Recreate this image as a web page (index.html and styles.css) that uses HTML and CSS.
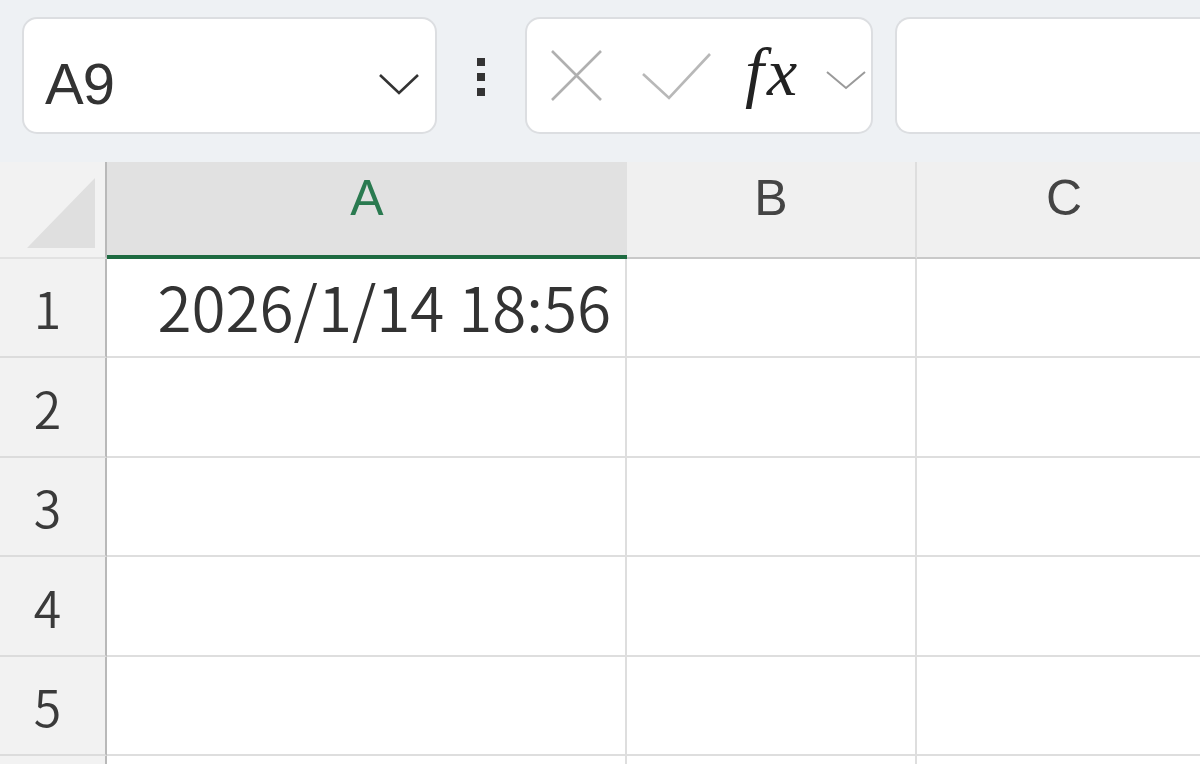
FILE: index.html
```html
<!DOCTYPE html>
<html lang="ja">
<head>
<meta charset="utf-8">
<title>Excel</title>
<link rel="stylesheet" href="styles.css">
</head>
<body>
<div class="toolbar">
  <div class="namebox">
    <span class="name">A9</span>
    <svg class="chev" width="42" height="24" viewBox="0 0 42 24"><polyline points="2,3 21,21 40,3" fill="none" stroke="#333" stroke-width="2.6"/></svg>
  </div>
  <div class="grip">
    <span class="dot"></span><span class="dot"></span><span class="dot"></span>
  </div>
  <div class="fbuttons">
    <svg class="icon-x" width="54" height="54" viewBox="0 0 54 54"><path d="M2 2 L51 51 M51 2 L2 51" stroke="#b0b0b0" stroke-width="2.6" fill="none"/></svg>
    <svg class="icon-check" width="72" height="50" viewBox="0 0 72 50"><polyline points="2,22 28,46 69,2" fill="none" stroke="#b8b8b8" stroke-width="2.6"/></svg>
    <span class="fx"><span class="fx-f">f</span>x</span>
    <svg class="chev-small" width="42" height="22" viewBox="0 0 42 22"><polyline points="2,3 21,19 40,3" fill="none" stroke="#9a9a9a" stroke-width="2"/></svg>
  </div>
  <div class="finput"></div>
</div>
<div class="sheet">
  <div class="corner"><svg width="70" height="72" viewBox="0 0 70 72"><polygon points="0,70 68,0 68,70" fill="#dfdfdf"/></svg></div>
  <div class="colhead sel">A</div>
  <div class="colhead">B</div>
  <div class="colhead">C</div>

  <div class="rowhead">1</div>
  <div class="cell"><span class="val">2026/1/14 18:56</span></div>
  <div class="cell"></div>
  <div class="cell"></div>

  <div class="rowhead">2</div>
  <div class="cell"></div>
  <div class="cell"></div>
  <div class="cell"></div>

  <div class="rowhead">3</div>
  <div class="cell"></div>
  <div class="cell"></div>
  <div class="cell"></div>

  <div class="rowhead">4</div>
  <div class="cell"></div>
  <div class="cell"></div>
  <div class="cell"></div>

  <div class="rowhead">5</div>
  <div class="cell"></div>
  <div class="cell"></div>
  <div class="cell"></div>

  <div class="rowhead"></div>
  <div class="cell"></div>
  <div class="cell"></div>
  <div class="cell"></div>
</div>
</body>
</html>
```
FILE: styles.css
```css
html, body {
  margin: 0;
  padding: 0;
  width: 1200px;
  height: 764px;
  overflow: hidden;
  background: #ffffff;
  font-family: "Liberation Sans", Arial, sans-serif;
  color: #333333;
}

.toolbar {
  display: flex;
  align-items: flex-start;
  height: 162px;
  box-sizing: border-box;
  padding: 17px 0 0 22px;
  background: #eef1f4;
}

.namebox {
  flex: 0 0 415px;
  height: 117px;
  box-sizing: border-box;
  background: #ffffff;
  border: 2px solid #dcdee1;
  border-radius: 15px;
  display: flex;
  align-items: flex-start;
  justify-content: space-between;
  padding: 36px 15px 0 21px;
}

.name {
  font-size: 58px;
  line-height: 58px;
  color: #333333;
  letter-spacing: -1px;
}

.chev {
  margin-top: 17px;
}

.grip {
  flex: 0 0 88px;
  display: flex;
  flex-direction: column;
  align-items: center;
  gap: 7px;
  padding-top: 41px;
}

.dot {
  width: 8px;
  height: 8px;
  background: #333333;
}

.fbuttons {
  flex: 0 0 348px;
  height: 117px;
  box-sizing: border-box;
  background: #ffffff;
  border: 2px solid #dcdee1;
  border-radius: 15px;
  display: flex;
  align-items: flex-start;
  padding: 0 0 0 23px;
}

.icon-x {
  margin-top: 30px;
}

.icon-check {
  margin-top: 33px;
  margin-left: 37px;
}

.fx {
  font-family: "Liberation Serif", "Times New Roman", serif;
  font-style: italic;
  font-size: 68px;
  line-height: 68px;
  color: #222222;
  margin-top: 19px;
  margin-left: 32px;
}

.fx-f {
  letter-spacing: 3px;
}

.chev-small {
  margin-top: 50px;
  margin-left: 28px;
}

.finput {
  flex: 1 1 auto;
  margin-left: 22px;
  height: 117px;
  box-sizing: border-box;
  background: #ffffff;
  border: 2px solid #dcdee1;
  border-right: 0;
  border-radius: 15px 0 0 15px;
}

.sheet {
  display: grid;
  grid-template-columns: 107px 520px 290px 296px;
  grid-template-rows: 97px repeat(5, 99.4px) 8px;
  width: 1200px;
  overflow: hidden;
  background: #ffffff;
}

.corner {
  background: #f2f2f2;
  border-right: 2px solid #b9b9b9;
  border-bottom: 2px solid #e2e2e2;
  box-sizing: border-box;
  padding: 16px 0 0 27px;
}

.corner svg {
  display: block;
}

.colhead {
  background: #f0f0f0;
  border-right: 2px solid #dedede;
  border-bottom: 2px solid #c9c9c9;
  box-sizing: border-box;
  display: flex;
  justify-content: center;
  align-items: flex-start;
  padding-top: 11px;
  font-size: 50px;
  line-height: 50px;
  color: #444444;
}

.colhead.sel {
  background: #e1e1e1;
  border-right: 0;
  border-bottom: 4px solid #1e6b41;
  color: #2a7a50;
}

.rowhead {
  background: #f2f2f2;
  border-right: 2px solid #b9b9b9;
  border-bottom: 2px solid #dcdcdc;
  box-sizing: border-box;
  display: flex;
  align-items: flex-end;
  justify-content: center;
  padding: 0 10px 24px 0;
  font-family: "Noto Sans CJK JP", "Liberation Sans", sans-serif;
  font-weight: 350;
  font-size: 50px;
  line-height: 50px;
  color: #3a3a3a;
}

.cell {
  border-right: 2px solid #dedede;
  border-bottom: 2px solid #dedede;
  box-sizing: border-box;
  display: flex;
  align-items: flex-end;
  justify-content: flex-end;
  padding: 0 14px 20px 0;
}

.val {
  font-family: "Noto Sans CJK JP", "Liberation Sans", sans-serif;
  font-weight: 350;
  font-size: 62px;
  line-height: 62px;
  color: #333333;
  white-space: nowrap;
}
```
